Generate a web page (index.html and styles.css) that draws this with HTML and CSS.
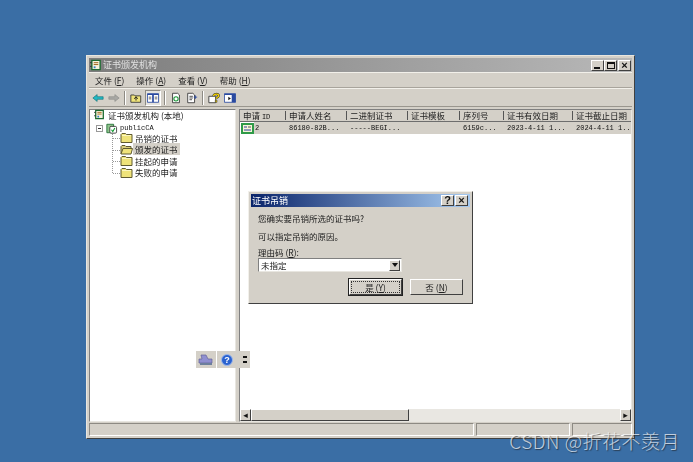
FILE: index.html
```html
<!DOCTYPE html>
<html lang="zh">
<head>
  <meta charset="UTF-8">
  <title>证书颁发机构</title>
  <link rel="stylesheet" href="styles.css">
</head>
<body>
<svg class="defs" width="0" height="0">
  <symbol id="folder" viewBox="0 0 13 11">
    <path d="M1 2.500 2 1.500h3.500l1 1H12v8H1z" fill="#efe37a" stroke="#5f5a30"/>
    <path d="M2 3.500h9" stroke="#fbf6c0"/>
  </symbol>
  <symbol id="folder-open" viewBox="0 0 13 11">
    <path d="M1 10V2.500l1-1h3l1 1h5v2" fill="#d9cd7c" stroke="#5f5a30"/>
    <path d="M1 10 3 4.500h9.500L11 10z" fill="#efe37a" stroke="#5f5a30"/>
  </symbol>
  <symbol id="ca" viewBox="0 0 13 13">
    <path d="M2 1.500h9v10H2z" fill="#f5f3dc" stroke="#1d6b31" stroke-width="1.500"/>
    <path d="M4 4h5M4 6h5" stroke="#9a5d12"/>
    <path d="M4 8h2v2H4z" fill="#2f7fbf"/>
    <path d="M0 4h2M0 8h2" stroke="#333"/>
  </symbol>
  <symbol id="ca-ok" viewBox="0 0 14 13">
    <path d="M1.500 1.500h8v10h-8z" fill="#8fc48c" stroke="#1d6b31"/>
    <rect x="5" y="4" width="8" height="8" rx="1.500" fill="#fff" stroke="#333"/>
    <path d="m7 8 1.500 2L11 6" fill="none" stroke="#0a9a2c" stroke-width="1.300"/>
  </symbol>
  <symbol id="cert" viewBox="0 0 13 11">
    <path d="M0 0h13v11H0z" fill="#2f9a48"/>
    <path d="M2 2h9v7H2z" fill="#f7f5d8"/>
    <path d="M3 4h3M3 7h7" stroke="#2a3fa0"/>
    <path d="M7 4h3" stroke="#555"/>
  </symbol>
</svg>

<div class="window">
  <div class="titlebar">
    <svg class="title-icon"><use href="#ca"/></svg>
    <span class="title-text">证书颁发机构</span>
    <div class="caption-btns">
      <span class="cap-btn"><i class="glyph-min"></i></span>
      <span class="cap-btn"><i class="glyph-max"></i></span>
      <span class="cap-btn close">×</span>
    </div>
  </div>

  <div class="menubar">
    <span>文件 (<u>F</u>)</span>
    <span>操作 (<u>A</u>)</span>
    <span>查看 (<u>V</u>)</span>
    <span>帮助 (<u>H</u>)</span>
  </div>

  <div class="toolbar">
    <svg class="tool" viewBox="0 0 14 12"><path d="M1 6 6 2v2.500h7v3H6V10z" fill="#22b8c4" stroke="#0d6b70" stroke-width=".7"/></svg>
    <svg class="tool" viewBox="0 0 14 12"><path d="M13 6 8 2v2.500H1v3h7V10z" fill="#a8a8a4" stroke="#8a8a86" stroke-width=".7"/></svg>
    <span class="tool-sep"></span>
    <svg class="tool" viewBox="0 0 14 12"><path d="M1 2.500h4l1 1h6.500V11H1z" fill="#efe37a" stroke="#333"/><path d="M7 9V5M5 7l2-2.500L9 7" fill="none" stroke="#111"/></svg>
    <span class="tool-on">
      <svg class="tool" viewBox="0 0 14 12"><path d="M.5 1h13v10H.5z" fill="#fff" stroke="#2a4aa0"/><path d="M.5 1h13v1.500H.5zM6 2.500h2V11H6z" fill="#2a4aa0"/><path d="M2 5h3M2 7h3M9 5h3M9 7h3" stroke="#555"/></svg>
    </span>
    <span class="tool-sep"></span>
    <svg class="tool" viewBox="0 0 14 12"><path d="M3 .5h6l2 2v9H3z" fill="#fff" stroke="#333"/><circle cx="7" cy="7" r="2.500" fill="none" stroke="#1f9a3c" stroke-width="1.300"/></svg>
    <svg class="tool" viewBox="0 0 14 12"><path d="M2 .5h6l2 2v9H2z" fill="#fff" stroke="#333"/><path d="M4 4h4M4 6h4M4 8h3" stroke="#333"/><path d="M9 5h4M11 3v4" stroke="#2a4aa0"/></svg>
    <span class="tool-sep"></span>
    <svg class="tool" viewBox="0 0 14 12"><path d="M1 4h8v7.500H1z" fill="#fff" stroke="#333"/><path d="M6.500 3.800C6.500 1 12.500.5 12.500 3.200c0 2-3 1.800-3 3.800" fill="none" stroke="#333" stroke-width="2.800"/><path d="M6.500 3.800C6.500 1 12.500.5 12.500 3.200c0 2-3 1.800-3 3.800" fill="none" stroke="#f0d000" stroke-width="1.600"/><path d="M8.500 8.500h2v2.500h-2z" fill="#f0d000" stroke="#333" stroke-width=".6"/></svg>
    <svg class="tool" viewBox="0 0 14 12"><path d="M.5 1h13v10H.5z" fill="#fff" stroke="#2a4aa0"/><path d="M.5 1h13v1.500H.5zM9 2.500h4.500V11H9z" fill="#2a4aa0"/><path d="m5 4.500 3 2-3 2z" fill="#111"/></svg>
  </div>

  <div class="panes">
    <div class="tree">
      <div class="tree-root"><svg class="ico"><use href="#ca"/></svg><span>证书颁发机构 (本地)</span></div>
      <div class="tree-ca">
        <span class="expander"></span>
        <svg class="ico"><use href="#ca-ok"/></svg>
        <span class="latin">publicCA</span>
      </div>
      <ul class="tree-kids">
        <li><svg class="ico"><use href="#folder"/></svg><span>吊销的证书</span></li>
        <li><svg class="ico"><use href="#folder-open"/></svg><span class="selected">颁发的证书</span></li>
        <li><svg class="ico"><use href="#folder"/></svg><span>挂起的申请</span></li>
        <li><svg class="ico"><use href="#folder"/></svg><span>失败的申请</span></li>
      </ul>
    </div>

    <div class="list">
      <div class="list-head">
        <span class="c1">申请 <b class="latin">ID</b></span>
        <span class="c2">申请人姓名</span>
        <span class="c3">二进制证书</span>
        <span class="c4">证书模板</span>
        <span class="c5">序列号</span>
        <span class="c6">证书有效日期</span>
        <span class="c7">证书截止日期</span>
      </div>
      <div class="list-row">
        <span class="c1"><svg class="ico cert"><use href="#cert"/></svg><b class="latin">2</b></span>
        <span class="c2 latin">86180-82B...</span>
        <span class="c3 latin">-----BEGI...</span>
        <span class="c4"></span>
        <span class="c5 latin">6159c...</span>
        <span class="c6 latin">2023-4-11 1...</span>
        <span class="c7 latin">2024-4-11 1..</span>
      </div>
      <div class="list-body"></div>
      <div class="hscroll">
        <span class="sb-btn">◂</span>
        <span class="sb-thumb"></span>
        <span class="sb-track"></span>
        <span class="sb-btn">▸</span>
      </div>
    </div>
  </div>

  <div class="statusbar">
    <span class="st1"></span>
    <span class="st2"></span>
    <span class="st3"></span>
  </div>
</div>

<div class="mini-bar">
  <span class="mini-btn">
    <svg viewBox="0 0 16 12" width="16" height="12"><path d="M3 1h5l2 4h4v4H1V5h3z" fill="#8f8fd0" stroke="#62629a" stroke-width=".7"/><path d="M2 9h12v2H2z" fill="#6c7f9c"/></svg>
  </span>
  <span class="mini-btn">
    <svg viewBox="0 0 12 12" width="12" height="12"><circle cx="6" cy="6" r="5.500" fill="#2a62d0"/><circle cx="6" cy="6" r="5.500" fill="none" stroke="#9db8ea"/><text x="6" y="9" class="mini-q">?</text></svg>
  </span>
  <span class="mini-more"><i></i><i></i></span>
</div>

<div class="dialog">
  <div class="dlg-title">
    <span>证书吊销</span>
    <div class="caption-btns">
      <span class="cap-btn help">?</span>
      <span class="cap-btn close">×</span>
    </div>
  </div>
  <div class="dlg-body">
    <p>您确实要吊销所选的证书吗?</p>
    <p>可以指定吊销的原因。</p>
    <label>理由码 (<u>R</u>):</label>
    <div class="combo"><span>未指定</span><span class="combo-btn"><i></i></span></div>
    <div class="dlg-btns">
      <span class="btn default"><span>是 (<u>Y</u>)</span></span>
      <span class="btn"><span>否 (<u>N</u>)</span></span>
    </div>
  </div>
</div>

<div class="watermark">CSDN @折花不羡月</div>
</body>
</html>
```
FILE: styles.css
```css
* {
  box-sizing: border-box;
}
html, body {
  margin: 0;
  height: 100%;
}
body {
  position: relative;
  width: 693px;
  height: 462px;
  overflow: hidden;
  background: #3a6ea5;
  font-family: "Noto Sans CJK SC", "Liberation Sans", sans-serif;
  font-size: 8.5px;
  color: #222;
}
.defs {
  position: absolute;
}
.latin {
  font-family: "Liberation Mono", monospace;
  font-size: 7px;
  font-weight: normal;
  color: #111;
}
u {
  text-decoration: underline;
}

/* main window */
.window {
  position: absolute;
  left: 86px;
  top: 55px;
  width: 549px;
  height: 384px;
  display: flex;
  flex-direction: column;
  padding: 2px;
  background: #d4d0c8;
  border: 1px solid #404040;
  border-top-color: #e8e6e0;
  border-left-color: #e8e6e0;
  filter: blur(0.3px);
}
.titlebar {
  height: 14px;
  flex: none;
  display: flex;
  align-items: center;
  padding: 0 1px;
  background: linear-gradient(to right, #7d7d7d, #b8b8b8);
  color: #e0e0e0;
}
.title-icon {
  width: 12px;
  height: 12px;
  margin-right: 1px;
}
.title-text {
  flex: 1;
  font-size: 9px;
  line-height: 12px;
  margin-bottom: 1px;
}
.caption-btns {
  display: flex;
}
.cap-btn {
  width: 13px;
  height: 11px;
  display: flex;
  align-items: center;
  justify-content: center;
  background: #d4d0c8;
  border: 1px solid #404040;
  border-top-color: #fff;
  border-left-color: #fff;
  font-family: "Liberation Sans", sans-serif;
  font-size: 11px;
  font-weight: bold;
  line-height: 1;
  color: #111;
}
.cap-btn.close {
  margin-left: 1px;
}
.glyph-min {
  width: 6px;
  height: 2px;
  margin-top: 5px;
  margin-right: 1px;
  background: #111;
}
.glyph-max {
  width: 8px;
  height: 7px;
  border: 1px solid #111;
  border-top-width: 2px;
}
.menubar {
  height: 16px;
  flex: none;
  display: flex;
  align-items: center;
  gap: 12px;
  padding-left: 6px;
  border-top: 1px solid #f2f0ea;
  border-bottom: 1px solid #a8a49c;
}
.toolbar {
  height: 19px;
  flex: none;
  display: flex;
  align-items: center;
  gap: 4px;
  padding-left: 3px;
  border-top: 1px solid #f2f0ea;
  border-bottom: 1px solid #9a968e;
}
.tool {
  width: 12px;
  height: 12px;
  flex: none;
  display: block;
}
.tool-sep {
  width: 2px;
  height: 14px;
  border-left: 1px solid #8d8a83;
  border-right: 1px solid #fff;
}
.tool-on {
  padding: 1px;
  margin: 0 -1px;
  background: #e6e4de;
  border: 1px solid #8d8a83;
  border-right-color: #fff;
  border-bottom-color: #fff;
}
.panes {
  flex: 1;
  min-height: 0;
  margin-top: 2px;
  display: flex;
  gap: 3px;
}
.tree {
  width: 147px;
  flex: none;
  padding: 0 0 0 3px;
  background: #fff;
  border: 1px solid #808080;
  border-right-color: #e8e6e0;
  border-bottom-color: #e8e6e0;
}
.tree-root, .tree-ca, .tree-kids li {
  height: 11.5px;
  display: flex;
  align-items: center;
  white-space: nowrap;
}
.tree-root {
  margin-top: -1px;
}
.ico {
  width: 13px;
  height: 11px;
  flex: none;
  margin-right: 2px;
}
.tree-ca {
  margin-top: 2px;
  padding-left: 3px;
}
.expander {
  position: relative;
  width: 7px;
  height: 7px;
  margin-right: 2px;
  border: 1px solid #999;
}
.expander::after {
  content: "";
  position: absolute;
  left: 1px;
  top: 2px;
  width: 3px;
  height: 1px;
  background: #333;
}
.tree-kids {
  list-style: none;
  margin: -2px 0 0 19px;
  padding: 0 0 0 7px;
  border-left: 1px dotted #999;
  height: 41px;
}
.tree-kids li {
  position: relative;
}
.tree-kids li::before {
  content: "";
  position: absolute;
  left: -7px;
  top: 6px;
  width: 7px;
  border-top: 1px dotted #999;
}
.tree-kids .selected {
  padding: 0 2px;
  margin-left: -2px;
  background: #d4d0c8;
}
.list {
  flex: 1;
  min-width: 0;
  display: flex;
  flex-direction: column;
  background: #fff;
  border: 1px solid #808080;
  border-right-color: #e8e6e0;
  border-bottom-color: #e8e6e0;
}
.list-head, .list-row {
  display: grid;
  grid-template-columns: 46px 61px 61px 52px 44px 69px 1fr;
  flex: none;
  overflow: hidden;
  white-space: nowrap;
}
.list-head {
  height: 12px;
  background: #d4d0c8;
  border-bottom: 1px solid #6e6e6e;
}
.list-head span {
  padding-left: 3px;
  border-right: 1px solid #555;
  height: 9px;
  margin-top: 1px;
  line-height: 9px;
}
.list-head span:last-child {
  border-right: 0;
}
.list-row {
  height: 12px;
  align-items: center;
  background: linear-gradient(#d4d0c8, #d4d0c8) 14px 0 no-repeat;
}
.list-row span {
  padding-left: 3px;
  overflow: hidden;
}
.list-row .c1 {
  display: flex;
  align-items: center;
  padding-left: 1px;
}
.cert {
  margin-right: 1px;
}
.list-body {
  flex: 1;
}
.hscroll {
  height: 12px;
  flex: none;
  display: flex;
  background: #e9e7e2;
}
.sb-btn {
  width: 11px;
  flex: none;
  display: flex;
  align-items: center;
  justify-content: center;
  background: #d4d0c8;
  border: 1px solid #404040;
  border-top-color: #fff;
  border-left-color: #fff;
  font-family: "DejaVu Sans", sans-serif;
  font-size: 9px;
  line-height: 1;
  color: #111;
}
.sb-thumb {
  width: 158px;
  flex: none;
  background: #d4d0c8;
  border: 1px solid #404040;
  border-top-color: #fff;
  border-left-color: #fff;
}
.sb-track {
  flex: 1;
}
.statusbar {
  height: 13px;
  flex: none;
  margin-top: 1px;
  display: flex;
  gap: 2px;
}
.statusbar span {
  border: 1px solid #fff;
  border-top-color: #8d8a83;
  border-left-color: #8d8a83;
}
.st1 {
  flex: 1;
}
.st2 {
  width: 94px;
}
.st3 {
  width: 60px;
}

/* little floating toolbar */
.mini-bar {
  position: absolute;
  left: 196px;
  top: 351px;
  height: 17px;
  display: flex;
  gap: 1px;
  filter: blur(0.3px);
}
.mini-btn {
  width: 20px;
  display: flex;
  align-items: center;
  justify-content: center;
  background: #d4d0c8;
}
.mini-q {
  font-family: "Liberation Sans", sans-serif;
  font-size: 9px;
  font-weight: bold;
  fill: #fff;
  text-anchor: middle;
}
.mini-more {
  width: 11px;
  margin-left: 1px;
  display: flex;
  flex-direction: column;
  align-items: center;
  justify-content: center;
  gap: 3px;
  background: #d4d0c8;
}
.mini-more i {
  width: 4px;
  height: 2px;
  background: #111;
}

/* revoke dialog */
.dialog {
  position: absolute;
  left: 248px;
  top: 191px;
  width: 225px;
  height: 113px;
  padding: 2px;
  background: #d4d0c8;
  border: 1px solid #404040;
  border-top-color: #f2f0ea;
  border-left-color: #f2f0ea;
  filter: blur(0.3px);
}
.dlg-title {
  height: 13px;
  display: flex;
  align-items: center;
  justify-content: space-between;
  padding: 0 2px 0 1px;
  background: linear-gradient(to right, #0a246a, #a6caf0);
  color: #fff;
  font-size: 9px;
}
.dlg-body {
  padding: 5px 0 0 7px;
}
.dlg-body p {
  margin: 0 0 6px;
  height: 12px;
  line-height: 12px;
}
.dlg-body label {
  display: block;
  height: 12px;
  line-height: 12px;
  margin-top: -2px;
}
.combo {
  width: 144px;
  height: 14px;
  display: flex;
  justify-content: space-between;
  align-items: center;
  padding: 0 1px 0 2px;
  background: #fff;
  border: 1px solid #808080;
  border-right-color: #e8e6e0;
  border-bottom-color: #e8e6e0;
}
.combo-btn {
  width: 11px;
  height: 11px;
  display: flex;
  align-items: center;
  justify-content: center;
  background: #d4d0c8;
  border: 1px solid #404040;
  border-top-color: #fff;
  border-left-color: #fff;
}
.combo-btn i {
  border: 3px solid transparent;
  border-top: 4px solid #111;
  border-bottom: 0;
}
.dlg-btns {
  display: flex;
  gap: 8px;
  margin: 7px 0 0 91px;
}
.btn {
  width: 53px;
  height: 16px;
  display: flex;
  align-items: center;
  justify-content: center;
  background: #d4d0c8;
  border: 1px solid #404040;
  border-top-color: #fff;
  border-left-color: #fff;
}
.btn.default {
  outline: 1px solid #222;
  padding: 1px;
}
.btn.default span {
  width: 100%;
  height: 100%;
  display: flex;
  align-items: center;
  justify-content: center;
  border: 1px dotted #333;
}

.watermark {
  position: absolute;
  right: 13px;
  top: 430px;
  font-size: 19px;
  font-weight: 300;
  line-height: 22px;
  letter-spacing: 0.5px;
  color: rgba(255, 255, 255, 0.7);
  text-shadow: 1px 1px 1px rgba(30, 30, 30, 0.6);
  white-space: nowrap;
}
```
